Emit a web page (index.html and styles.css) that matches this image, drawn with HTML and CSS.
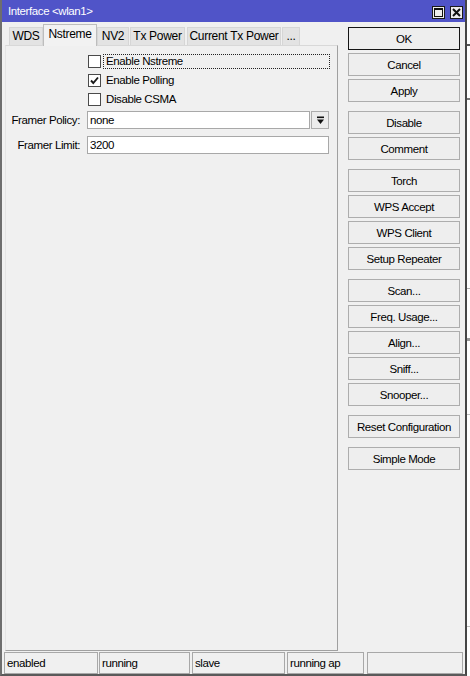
FILE: index.html
```html
<!DOCTYPE html>
<html>
<head>
<meta charset="utf-8">
<link rel="stylesheet" href="styles.css">
</head>
<body>
<div class="screen">
  <div class="window">
    <div class="titlebar">
      <span class="title">Interface &lt;wlan1&gt;</span>
      <div class="tb-buttons">
        <span class="tb-btn"><svg width="11" height="11" viewBox="0 0 11 11"><rect x="1.5" y="1.5" width="8" height="8" fill="none" stroke="#111" stroke-width="1"/><line x1="1.5" y1="2" x2="9.5" y2="2" stroke="#111" stroke-width="2"/></svg></span>
        <span class="tb-btn"><svg width="11" height="11" viewBox="0 0 11 11"><path d="M2 2 L9 9 M9 2 L2 9" stroke="#111" stroke-width="2" fill="none"/></svg></span>
      </div>
    </div>
    <div class="main">
      <div class="tabarea">
        <div class="tabs">
          <span class="tab t-wds">WDS</span>
          <span class="tab tab-active t-nstreme">Nstreme</span>
          <span class="tab t-nv2">NV2</span>
          <span class="tab t-txp">Tx Power</span>
          <span class="tab t-ctxp">Current Tx Power</span>
          <span class="tab t-more">...</span>
        </div>
        <div class="panel">
          <div class="check-row"><span class="checkbox"></span><span class="check-label focus">Enable Nstreme</span></div>
          <div class="check-row"><span class="checkbox"><svg width="11" height="11" viewBox="0 0 11 11"><polyline points="2,5.5 4.3,8 9,2.5" fill="none" stroke="#1a1a1a" stroke-width="1.9"/></svg></span><span class="check-label">Enable Polling</span></div>
          <div class="check-row"><span class="checkbox"></span><span class="check-label">Disable CSMA</span></div>
          <div class="field-row first-field">
            <span class="field-label">Framer Policy:</span>
            <span class="input input-select">none</span>
            <span class="drop-btn"><svg width="9" height="9" viewBox="0 0 9 9"><rect x="1" y="0.5" width="7" height="1.6" fill="#111"/><polygon points="1,3.5 8,3.5 4.5,8" fill="#111"/></svg></span>
          </div>
          <div class="field-row second-field">
            <span class="field-label">Framer Limit:</span>
            <span class="input input-wide">3200</span>
          </div>
        </div>
      </div>
      <div class="buttons">
        <div class="btn-group">
          <div class="btn btn-default">OK</div>
          <div class="btn">Cancel</div>
          <div class="btn">Apply</div>
        </div>
        <div class="btn-group">
          <div class="btn">Disable</div>
          <div class="btn">Comment</div>
        </div>
        <div class="btn-group">
          <div class="btn">Torch</div>
          <div class="btn">WPS Accept</div>
          <div class="btn">WPS Client</div>
          <div class="btn">Setup Repeater</div>
        </div>
        <div class="btn-group">
          <div class="btn">Scan...</div>
          <div class="btn">Freq. Usage...</div>
          <div class="btn">Align...</div>
          <div class="btn">Sniff...</div>
          <div class="btn">Snooper...</div>
        </div>
        <div class="btn-group">
          <div class="btn">Reset Configuration</div>
        </div>
        <div class="btn-group">
          <div class="btn">Simple Mode</div>
        </div>
      </div>
    </div>
    <div class="statusbar">
      <span class="cell s1">enabled</span>
      <span class="cell s2">running</span>
      <span class="cell s3">slave</span>
      <span class="cell s4">running ap</span>
      <span class="cell s5"></span>
    </div>
  </div>
  <div class="backdrop"></div>
</div>
</body>
</html>
```
FILE: styles.css
```css
* { box-sizing: border-box; }
html, body { margin: 0; padding: 0; }
body {
  width: 470px;
  height: 676px;
  overflow: hidden;
  background: #fff;
  font-family: "Liberation Sans", Arial, sans-serif;
  font-size: 11.5px;
  letter-spacing: -0.4px;
  color: #000;
}
.screen { display: flex; width: 470px; height: 676px; }
.window {
  width: 467px;
  height: 676px;
  flex: none;
  background: #f0f0f0;
  border-left: 2px solid #6e6e6e;
  border-right: 2px solid #454545;
  border-bottom: 2px solid #5a5a5a;
  display: flex;
  flex-direction: column;
}
.titlebar {
  height: 22px;
  flex: none;
  background: #5054c8;
  color: #fff;
  display: flex;
  align-items: center;
  padding: 0 2px 0 6px;
}
.title { line-height: 22px; }
.tb-buttons {
  margin-left: auto;
  align-self: flex-start;
  margin-top: 6px;
  display: flex;
  gap: 5px;
}
.tb-btn {
  width: 13px;
  height: 13px;
  background: #ececec;
  border: 1px solid #1a1a1a;
  display: flex;
}
.main { display: flex; height: 629px; flex: none; }
.tabarea {
  margin-left: 3px;
  width: 333px;
  display: flex;
  flex-direction: column;
}
.tabs {
  height: 23px;
  flex: none;
  display: flex;
  align-items: flex-end;
  padding-left: 4px;
  position: relative;
  z-index: 1;
}
.tab {
  height: 18px;
  line-height: 17px;
  text-align: center;
  background: #e3e3e3;
  border: 1px solid #d6d6d6;
  border-bottom: none;
  font-size: 12px;
  letter-spacing: -0.3px;
}
.tab-active {
  height: 22px;
  margin-bottom: -1px;
  line-height: 19px;
  background: #f2f2f2;
  border-color: #bdbdbd;
}
.t-wds { width: 34px; }
.t-nstreme { width: 54px; }
.t-nv2 { width: 32px; }
.t-txp { width: 55px; margin-left: 1px; }
.t-ctxp { width: 94px; margin-left: 2px; }
.t-more { width: 18px; margin-left: 1px; }
.panel {
  flex: 1;
  border: 1px solid #a0a0a0;
  border-top-color: #d8d8d8;
  border-left-color: #e4e4e4;
  padding-top: 6px;
  display: flex;
  flex-direction: column;
}
.check-row {
  height: 19px;
  display: flex;
  align-items: center;
  padding-left: 82px;
}
.checkbox {
  width: 13px;
  height: 13px;
  background: #fff;
  border: 1px solid #4a4a4a;
  display: flex;
  flex: none;
}
.check-label {
  margin-left: 2px;
  width: 227px;
  height: 15px;
  line-height: 13px;
  padding-left: 2px;
  border: 1px dotted transparent;
}
.check-label.focus { border-color: #222; }
.field-row {
  height: 18px;
  display: flex;
  align-items: center;
}
.first-field { margin-top: 2px; }
.second-field { margin-top: 7px; }
.field-label {
  width: 74px;
  text-align: right;
  margin-right: 7px;
}
.input {
  height: 18px;
  background: #fff;
  border: 1px solid #a8a8a8;
  padding-left: 2px;
  line-height: 16px;
}
.input-select { width: 223px; }
.input-wide { width: 242px; }
.drop-btn {
  width: 18px;
  height: 18px;
  margin-left: 1px;
  border: 1px solid #adadad;
  background: #ececec;
  display: flex;
  align-items: center;
  justify-content: center;
}
.buttons {
  margin-left: 10px;
  width: 112px;
  padding-top: 5px;
  display: flex;
  flex-direction: column;
  gap: 9px;
}
.btn-group { display: flex; flex-direction: column; gap: 3px; }
.btn {
  height: 23px;
  border: 1px solid #adadad;
  background: #eeeeee;
  text-align: center;
  line-height: 22px;
  font-size: 11.5px;
  letter-spacing: -0.4px;
}
.btn-default { border-color: #151515; }
.statusbar {
  margin-top: 1px;
  height: 22px;
  flex: none;
  display: flex;
  padding-left: 2px;
}
.cell {
  height: 22px;
  border: 1px solid #a8a8a8;
  padding-left: 2px;
  line-height: 20px;
}
.s1 { width: 94px; }
.s2 { width: 91px; margin-left: 1px; }
.s3 { width: 93px; margin-left: 2px; }
.s4 { width: 77px; margin-left: 2px; }
.s5 { width: 96px; margin-left: 3px; }
.backdrop {
  flex: 1;
  background: linear-gradient(to bottom,
    #ffffff 0, #ffffff 44px, #555 44px, #555 46px,
    #ffffff 46px, #ffffff 98px, #777 98px, #777 100px,
    #ffffff 100px, #ffffff 288px, #b0b0b0 288px, #b0b0b0 289px,
    #ffffff 289px, #ffffff 338px, #999 338px, #999 341px,
    #ffffff 341px, #ffffff 414px, #c0c0c0 414px, #c0c0c0 415px,
    #ffffff 415px, #ffffff 626px, #c0c0c0 626px, #c0c0c0 627px,
    #ffffff 627px);
}
```
